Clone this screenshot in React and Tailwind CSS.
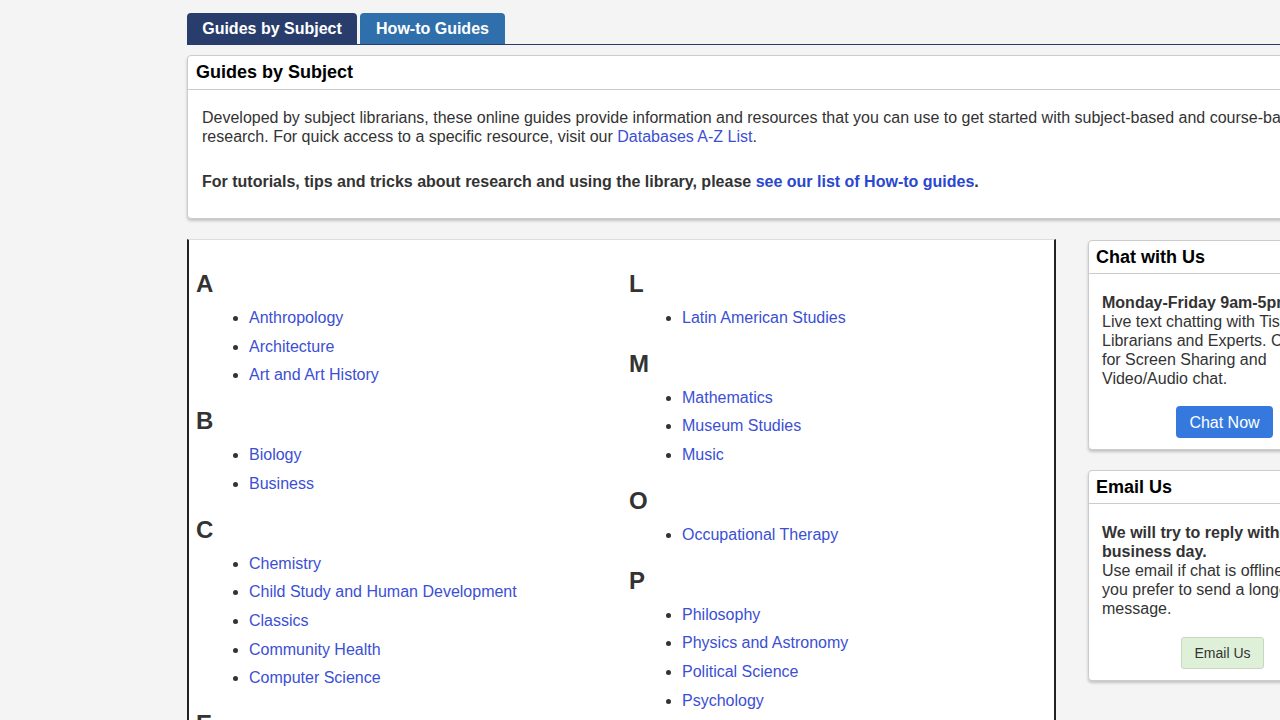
import React from 'react';

const leftGroups = [
  { letter: 'A', items: ['Anthropology', 'Architecture', 'Art and Art History'] },
  { letter: 'B', items: ['Biology', 'Business'] },
  {
    letter: 'C',
    items: ['Chemistry', 'Child Study and Human Development', 'Classics', 'Community Health', 'Computer Science'],
  },
  { letter: 'E', items: ['Economics', 'Education', 'English'] },
];

const rightGroups = [
  { letter: 'L', items: ['Latin American Studies'] },
  { letter: 'M', items: ['Mathematics', 'Museum Studies', 'Music'] },
  { letter: 'O', items: ['Occupational Therapy'] },
  { letter: 'P', items: ['Philosophy', 'Physics and Astronomy', 'Political Science', 'Psychology'] },
  { letter: 'R', items: ['Religion'] },
];

// one letter heading with its list of guides
const LetterGroup = ({ letter, items }) => (
  <div>
    <h2 className="mt-[18px] mb-[7px] h-[26px] leading-[26px] text-[24px] font-bold text-[#333]">{letter}</h2>
    <ul className="list-disc pl-[53px] text-[#333]">
      {items.map((item) => (
        <li key={item} className="leading-[28.7px]">
          <a href="#" className="text-[#3b4fd4]">{item}</a>
        </li>
      ))}
    </ul>
  </div>
);

const SideBox = ({ title, bold, text, button, buttonClass, buttonWrap }) => (
  <div className="rounded-[4px] border border-[#ccc] bg-white shadow-[0_2px_3px_rgba(0,0,0,0.2)]">
    <div className="h-[33px] border-b border-[#ccc] px-[7px] text-[18px] font-bold leading-[32px] text-black">{title}</div>
    <div className="px-[13px] pt-[19px] pb-[11px] text-[16px] leading-[19px] text-[#333]">
      <p className="font-bold">{bold}</p>
      <p>{text}</p>
      <div className={buttonWrap}>
        <button className={buttonClass}>{button}</button>
      </div>
    </div>
  </div>
);

export default function App() {
  return (
    <div className="min-h-[720px] overflow-hidden bg-[#f4f4f4] pl-[187px] pt-[13px] font-['Liberation_Sans',Arial,sans-serif]">
      <div className="w-[1170px]">
        {/* tabs */}
        <div className="flex gap-[3px] border-b border-[#283d6b]">
          <div className="h-[31px] w-[170px] rounded-t-[4px] bg-[#283d6b] text-center text-[16px] font-bold leading-[31px] text-white">Guides by Subject</div>
          <div className="h-[31px] w-[145px] rounded-t-[4px] bg-[#2f6fac] text-center text-[16px] font-bold leading-[31px] text-white">How-to Guides</div>
        </div>

        {/* intro panel */}
        <div className="mt-[10px] rounded-[4px] border border-[#ccc] bg-white shadow-[0_2px_3px_rgba(0,0,0,0.2)]">
          <div className="h-[34px] border-b border-[#ccc] px-[8px] text-[18px] font-bold leading-[33px] text-black">Guides by Subject</div>
          <div className="px-[14px] pt-[18px] pb-[27px] text-[16px] leading-[19px] text-[#333]">
            <p>
              Developed by subject librarians, these online guides provide information and resources that you can use to get started with subject-based and course-based research. For quick access to a specific resource, visit our{' '}
              <a href="#" className="text-[#3b4fd4]">Databases A-Z List</a>.
            </p>
            <p className="mt-[26px] font-bold">
              For tutorials, tips and tricks about research and using the library, please{' '}
              <a href="#" className="text-[#2a47d0]">see our list of How-to guides</a>.
            </p>
          </div>
        </div>

        <div className="mt-[20px] flex gap-[32px]">
          {/* A-Z list */}
          <div className="h-[600px] w-[869px] border-t border-[#ddd] border-x-2 border-x-[#222] bg-white pl-[7px] pt-[13px] text-[16px]">
            <div className="grid grid-cols-[433px_1fr]">
              <div>
                {leftGroups.map((g) => (
                  <LetterGroup key={g.letter} {...g} />
                ))}
              </div>
              <div>
                {rightGroups.map((g) => (
                  <LetterGroup key={g.letter} {...g} />
                ))}
              </div>
            </div>
          </div>

          {/* sidebar */}
          <div className="flex w-[269px] flex-col gap-[20px] pt-[1px]">
            <SideBox
              title="Chat with Us"
              bold="Monday-Friday 9am-5pm"
              text="Live text chatting with Tisch Librarians and Experts. Click here for Screen Sharing and Video/Audio chat."
              button="Chat Now"
              buttonWrap="mt-[18px] flex justify-center pl-[4px]"
              buttonClass="h-[32px] rounded-[4px] bg-[#3579de] px-[13px] text-[16px] text-white"
            />
            <SideBox
              title="Email Us"
              bold="We will try to reply within one business day."
              text="Use email if chat is offline or if you prefer to send a longer message."
              button="Email Us"
              buttonWrap="mt-[19px] flex justify-center"
              buttonClass="h-[32px] rounded-[3px] border border-[#c8d8c0] bg-[#dff0d8] px-[12px] text-[14px] text-[#333]"
            />
          </div>
        </div>
      </div>
    </div>
  );
}
